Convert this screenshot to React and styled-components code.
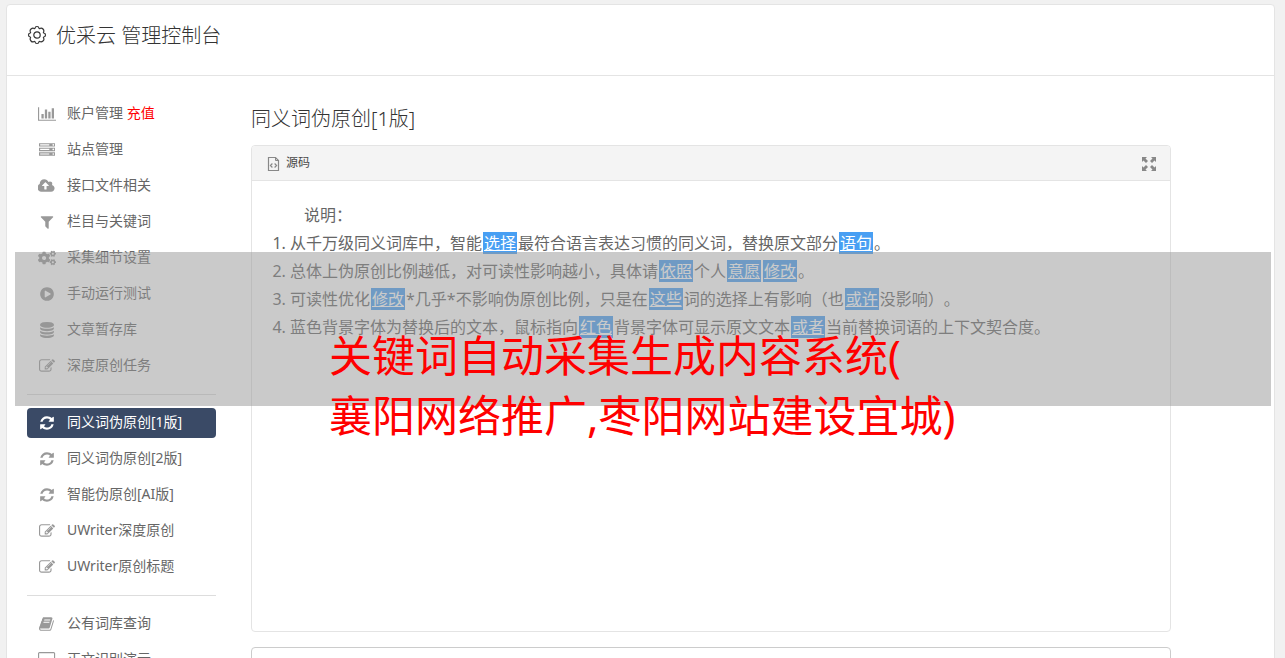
import styled, { createGlobalStyle } from "styled-components";
import { FaCogs } from "react-icons/fa";

const GlobalStyle = createGlobalStyle`
  * {
    box-sizing: border-box;
  }

  body {
    margin: 0;
    background-color: #f1f1f1;
    color: #666666;
    font-family: "Noto Sans", "Noto Sans CJK SC", sans-serif;
    font-size: 14px;
    text-spacing-trim: space-all;
  }
`;

const Page = styled.div`
  position: relative;
  padding: 4px 10px 20px 6px;
`;

const Panel = styled.div`
  background-color: #ffffff;
  border: 1px solid #e4e4e4;
  border-radius: 4px;
`;

const Header = styled.header`
  display: flex;
  align-items: flex-start;
  gap: 9px;
  padding: 16px 20px 24px;
  border-bottom: 1px solid #e4e4e4;

  svg {
    margin-top: 4px;
  }
`;

const Title = styled.h1`
  margin: 0;
  color: #333333;
  font-size: 20px;
  font-weight: 300;
  line-height: 30px;
`;

const Body = styled.div`
  display: flex;
  gap: 35px;
  padding: 23px 103px 20px 20px;
`;

const Sidebar = styled.nav`
  flex: 0 0 189px;
`;

const MenuGroup = styled.ul`
  display: flex;
  flex-direction: column;
  gap: 6px;
  margin: 0;
  padding: 0;
  list-style: none;

  & + & {
    margin-top: 13px;
    padding-top: 13px;
    border-top: 1px solid #dddddd;
  }
`;

const MenuLink = styled.a`
  display: flex;
  align-items: flex-start;
  gap: 10px;
  height: 30px;
  padding: 0 10px;
  border-radius: 4px;
  background-color: ${(props) => (props.$active ? "#3a4a66" : "transparent")};
  color: ${(props) => (props.$active ? "#ffffff" : "#666666")};
  line-height: 28px;
  text-decoration: none;
  white-space: nowrap;
`;

const MenuIcon = styled.span`
  display: flex;
  flex: 0 0 20px;
  align-items: center;
  justify-content: center;
  height: 30px;
  color: ${(props) => (props.$active ? "#ffffff" : "#999999")};

  svg {
    height: 16px;
    fill: currentColor;
  }
`;

const Recharge = styled.span`
  color: #ff0000;
`;

const Main = styled.main`
  flex: 1;
  min-width: 0;
`;

const Heading = styled.h2`
  margin: 5px 0 11px;
  color: #333333;
  font-size: 20px;
  font-weight: 300;
  line-height: 30px;
`;

const Editor = styled.section`
  border: 1px solid #e4e4e4;
  border-radius: 4px;
  overflow: hidden;
`;

const Toolbar = styled.div`
  display: flex;
  align-items: center;
  justify-content: space-between;
  height: 35px;
  padding: 2px 14px 0 15px;
  background-color: #f4f4f4;
  border-bottom: 1px solid #e4e4e4;
`;

const ToolButton = styled.button`
  display: flex;
  align-items: center;
  gap: 6px;
  padding: 0;
  border: none;
  background: none;
  color: #484848;
  font-family: inherit;
  font-size: 12px;
  line-height: 16px;
  cursor: pointer;
`;

const ToolLabel = styled.span`
  padding-bottom: 2px;
`;

const Content = styled.div`
  min-height: 450px;
  padding: 20px;
  font-size: 16px;
  line-height: 28px;
`;

const Intro = styled.p`
  margin: 0;
  text-indent: 2em;
`;

const Rules = styled.ol`
  margin: 0;
  padding-left: 18px;
`;

const Word = styled.a`
  margin: 0 1px;
  padding: 0 1px;
  background-color: #489ff3;
  color: #ffffff;
  text-decoration: underline;
`;

const Source = styled.textarea`
  display: block;
  width: 100%;
  height: 120px;
  margin-top: 15px;
  border: 1px solid #cccccc;
  border-radius: 4px;
  resize: none;
`;

const Banner = styled.div`
  position: absolute;
  top: 252px;
  right: 14px;
  left: 15px;
  height: 154px;
  padding: 74px 0 0 314px;
  background-color: rgba(150, 150, 150, 0.5);
  color: #ff0000;
  font-size: 43px;
  line-height: 60px;
  white-space: nowrap;
  pointer-events: none;
`;

const BannerLine = styled.div``;

const paths = {
  chart:
    "M640 896v512h-256v-512h256zm384-512v1024h-256v-1024h256zm1024 1152v128h-2048v-1536h128v1408h1920zm-640-896v768h-256v-768h256zm384-384v1152h-256v-1152h256z",
  server:
    "M128 1408h1024v-128h-1024v128zm0-512h1024v-128h-1024v128zm1568 448q0-40-28-68t-68-28-68 28-28 68 28 68 68 28 68-28 28-68zm-1568-960h1024v-128h-1024v128zm1568 448q0-40-28-68t-68-28-68 28-28 68 28 68 68 28 68-28 28-68zm0-512q0-40-28-68t-68-28-68 28-28 68 28 68 68 28 68-28 28-68zm96 832v384h-1792v-384h1792zm0-512v384h-1792v-384h1792zm0-512v384h-1792v-384h1792z",
  cloud:
    "M1216 864q0-14-9-23l-352-352q-9-9-23-9t-23 9l-351 351q-10 12-10 24 0 14 9 23t23 9h224v352q0 13 9.500 22.500t22.500 9.500h192q13 0 22.500-9.500t9.500-22.500v-352h224q13 0 22.500-9.500t9.500-22.500zm640 288q0 159-112.500 271.500t-271.500 112.500h-1088q-185 0-316.500-131.500t-131.500-316.500q0-130 70-240t188-165q-2-30-2-43 0-212 150-362t362-150q156 0 285.500 87t188.500 231q71-62 166-62 106 0 181 75t75 181q0 76-41 138 130 31 213.500 135.500t83.500 238.500z",
  filter:
    "M1595 295q17 41-14 70l-493 493v742q0 42-39 59-13 5-25 5-27 0-45-19l-256-256q-19-19-19-45v-486l-493-493q-31-29-14-70 17-39 59-39h1280q42 0 59 39z",
  play: "M896 128q209 0 385.500 103t279.500 279.500 103 385.500-103 385.500-279.500 279.500-385.500 103-385.500-103-279.500-279.500-103-385.500 103-385.500 279.500-279.500 385.500-103zm384 823q32-18 32-55t-32-55l-544-320q-31-19-64-1-32 19-32 56v640q0 37 32 56 16 8 32 8 17 0 32-9z",
  database:
    "M896 768q237 0 443-43t325-127v170q0 69-103 128t-280 93.500-385 34.500-385-34.500-280-93.500-103-128v-170q119 84 325 127t443 43zm0 768q237 0 443-43t325-127v170q0 69-103 128t-280 93.500-385 34.500-385-34.500-280-93.500-103-128v-170q119 84 325 127t443 43zm0-384q237 0 443-43t325-127v170q0 69-103 128t-280 93.500-385 34.500-385-34.500-280-93.500-103-128v-170q119 84 325 127t443 43zm0-1152q208 0 385 34.500t280 93.500 103 128v128q0 69-103 128t-280 93.500-385 34.500-385-34.500-280-93.500-103-128v-128q0-69 103-128t280-93.500 385-34.500z",
  edit: "M888 1184l116-116-152-152-116 116v56h96v96h56zm440-720q-16-16-33 1l-350 350q-17 17-1 33t33-1l350-350q17-17 1-33zm80 594v190q0 119-84.500 203.500t-203.500 84.500h-832q-119 0-203.500-84.500t-84.500-203.500v-832q0-119 84.500-203.500t203.500-84.500h832q63 0 117 25 15 7 18 23 3 17-9 29l-49 49q-14 14-32 8-23-6-45-6h-832q-66 0-113 47t-47 113v832q0 66 47 113t113 47h832q66 0 113-47t47-113v-126q0-13 9-22l64-64q15-15 35-7t20 29zm-96-738l288 288-672 672h-288v-288zm444 132l-92 92-288-288 92-92q28-28 68-28t68 28l152 152q28 28 28 68t-28 68z",
  refresh:
    "M1639 1056q0 5-1 7-64 268-268 434.500t-478 166.500q-146 0-282.500-55t-243.500-157l-129 129q-19 19-45 19t-45-19-19-45v-448q0-26 19-45t45-19h448q26 0 45 19t19 45-19 45l-137 137q71 66 161 102t187 36q134 0 250-65t186-179q11-17 53-117 8-23 30-23h192q13 0 22.500 9.500t9.500 22.500zm25-800v448q0 26-19 45t-45 19h-448q-26 0-45-19t-19-45 19-45l138-138q-148-137-349-137-134 0-250 65t-186 179q-11 17-53 117-8 23-30 23h-199q-13 0-22.500-9.500t-9.500-22.500v-7q65-268 270-434.500t480-166.500q146 0 284 55.500t245 156.500l130-129q19-19 45-19t45 19 19 45z",
  book: "M1639 478q40 57 18 129l-275 906q-19 64-76.500 107.500t-122.500 43.500h-923q-77 0-148.500-53.500t-99.500-131.500q-24-67-2-127 0-4 3-27t4-37q1-8-3-21.500t-3-19.500q2-11 8-21t16.500-23.500 16.500-23.500q23-38 45-91.500t30-91.500q3-10 .5-30t-.5-28q3-11 17-28t17-23q21-36 42-92t25-90q1-9-2.500-32t.5-28q4-13 22-30.500t22-22.500q19-26 42.500-84.500t27.500-96.500q1-8-3-25.500t-2-26.500q2-8 9-18t18-23 17-21q8-12 16.500-30.500t15-35 16-36 19.500-32 26.500-23.500 36-11.500 47.500 5.500l-1 3q38-9 51-9h761q74 0 114 56t18 130l-274 906q-36 119-71.500 153.500t-128.500 34.500h-869q-27 0-38 15-11 16-1 43 24 70 144 70h923q29 0 56-15.500t35-41.500l300-987q7-22 5-57 38 15 59 43zm-1064 2q-4 13 2 22.500t20 9.500h608q13 0 25.500-9.500t16.500-22.500l21-64q4-13-2-22.500t-20-9.500h-608q-13 0-25.500 9.500t-16.500 22.500zm-83 256q-4 13 2 22.500t20 9.500h608q13 0 25.500-9.500t16.500-22.500l21-64q4-13-2-22.500t-20-9.500h-608q-13 0-25.500 9.500t-16.500 22.500z",
  desktop:
    "M1792 992v-832q0-13-9.500-22.500t-22.500-9.500h-1600q-13 0-22.500 9.500t-9.500 22.500v832q0 13 9.500 22.500t22.500 9.500h1600q13 0 22.500-9.500t9.500-22.500zm128-832v1088q0 66-47 113t-113 47h-544q0 37 16 77.500t32 71 16 43.500q0 26-19 45t-45 19h-512q-26 0-45-19t-19-45q0-14 16-44t32-70 16-78h-544q-66 0-113-47t-47-113v-1088q0-66 47-113t113-47h1600q66 0 113 47t47 113z",
};

const iconWidths = { chart: 2048, cloud: 1920, desktop: 1920 };

const menu = [
  [
    { icon: "chart", label: "账户管理", extra: "充值" },
    { icon: "server", label: "站点管理" },
    { icon: "cloud", label: "接口文件相关" },
    { icon: "filter", label: "栏目与关键词" },
    { icon: "cogs", label: "采集细节设置" },
    { icon: "play", label: "手动运行测试" },
    { icon: "database", label: "文章暂存库" },
    { icon: "edit", label: "深度原创任务" },
  ],
  [
    { icon: "refresh", label: "同义词伪原创[1版]", active: true },
    { icon: "refresh", label: "同义词伪原创[2版]" },
    { icon: "refresh", label: "智能伪原创[AI版]" },
    { icon: "edit", label: "UWriter深度原创" },
    { icon: "edit", label: "UWriter原创标题" },
  ],
  [
    { icon: "book", label: "公有词库查询" },
    { icon: "desktop", label: "正文识别演示" },
  ],
];

function Icon({ name }) {
  if (name === "cogs") return <FaCogs size={18} />;

  return (
    <svg viewBox={`0 0 ${iconWidths[name] || 1792} 1792`} aria-hidden="true">
      <path d={paths[name]} />
    </svg>
  );
}

function GearIcon() {
  return (
    <svg
      width="20"
      height="20"
      viewBox="0 0 20 20"
      fill="none"
      stroke="#333333"
      strokeWidth="1.2"
      aria-hidden="true"
    >
      <path d="M8 3.2Q8.200 1.500 10 1.500T12 3.200Q12.300 4 13.400 3.200Q14.800 2.600 16 4T16.800 6.600Q16 7.700 16.800 8Q18.500 8.200 18.500 10T16.800 12Q16 12.300 16.800 13.400Q17.400 14.800 16 16T13.400 16.800Q12.300 16 12 16.800Q11.800 18.500 10 18.500T8 16.800Q7.700 16 6.600 16.800Q5.200 17.400 4 16T3.200 13.400Q4 12.300 3.200 12Q1.500 11.800 1.500 10T3.200 8Q4 7.700 3.200 6.600Q2.600 5.200 4 4T6.600 3.200Q7.700 4 8 3.200Z" />
      <circle cx="10" cy="10" r="3.200" />
    </svg>
  );
}

function SourceIcon() {
  return (
    <svg
      width="13"
      height="16"
      viewBox="0 0 13 16"
      fill="none"
      stroke="#888888"
      aria-hidden="true"
    >
      <path d="M1.500 1.500h7l3 3v10h-10z" strokeWidth="1.200" />
      <path d="M8.500 1.500v3h3" />
      <path d="M5.400 7.500l-2 2 2 2M7.600 7.500l2 2-2 2" strokeWidth="1.200" />
    </svg>
  );
}

function MaximizeIcon() {
  return (
    <svg width="14" height="14" viewBox="0 0 14 14" aria-hidden="true">
      <path
        fill="#888888"
        d="M0 0h5L3.500 1.500 6 4 4 6 1.500 3.500 0 5zM14 0v5l-1.500-1.500L10 6 8 4l2.500-2.500L9 0zM0 14V9l1.500 1.500L4 8l2 2-2.500 2.500L5 14zM14 14H9l1.500-1.500L8 10l2-2 2.500 2.500L14 9z"
      />
    </svg>
  );
}

function Menu() {
  return (
    <Sidebar>
      {menu.map((group, index) => (
        <MenuGroup key={index}>
          {group.map(({ icon, label, extra, active }) => (
            <li key={label}>
              <MenuLink href="#" $active={active}>
                <MenuIcon $active={active}>
                  <Icon name={icon} />
                </MenuIcon>
                <span>
                  {label}
                  {extra && <Recharge> {extra}</Recharge>}
                </span>
              </MenuLink>
            </li>
          ))}
        </MenuGroup>
      ))}
    </Sidebar>
  );
}

function App() {
  return (
    <>
      <GlobalStyle />
      <Page lang="zh-CN">
        <Panel>
          <Header>
            <GearIcon />
            <Title>优采云 管理控制台</Title>
          </Header>
          <Body>
            <Menu />
            <Main>
              <Heading>同义词伪原创[1版]</Heading>
              <Editor>
                <Toolbar>
                  <ToolButton type="button">
                    <SourceIcon />
                    <ToolLabel>源码</ToolLabel>
                  </ToolButton>
                  <ToolButton type="button" aria-label="全屏">
                    <MaximizeIcon />
                  </ToolButton>
                </Toolbar>
                <Content>
                  <Intro>说明：</Intro>
                  <Rules>
                    <li>
                      从千万级同义词库中，智能<Word href="#">选择</Word>
                      最符合语言表达习惯的同义词，替换原文部分
                      <Word href="#">语句</Word>。
                    </li>
                    <li>
                      总体上伪原创比例越低，对可读性影响越小，具体请
                      <Word href="#">依照</Word>个人<Word href="#">意愿</Word>
                      <Word href="#">修改</Word>。
                    </li>
                    <li>
                      可读性优化<Word href="#">修改</Word>
                      *几乎*不影响伪原创比例，只是在<Word href="#">这些</Word>
                      词的选择上有影响（也<Word href="#">或许</Word>没影响）。
                    </li>
                    <li>
                      蓝色背景字体为替换后的文本，鼠标指向
                      <Word href="#">红色</Word>背景字体可显示原文文本
                      <Word href="#">或者</Word>当前替换词语的上下文契合度。
                    </li>
                  </Rules>
                </Content>
              </Editor>
              <Source aria-label="原文" />
            </Main>
          </Body>
        </Panel>
        <Banner>
          <BannerLine>关键词自动采集生成内容系统(</BannerLine>
          <BannerLine>襄阳网络推广,枣阳网站建设宜城)</BannerLine>
        </Banner>
      </Page>
    </>
  );
}

export default App;
